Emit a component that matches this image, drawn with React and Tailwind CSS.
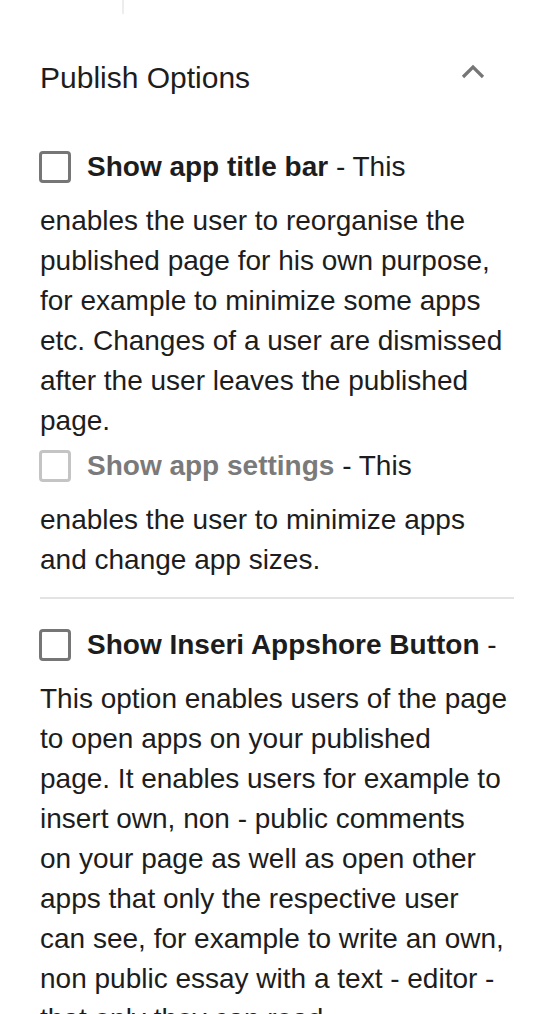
import React from "react";

function Box({ disabled }) {
    return (
        <span className={`shrink-0 w-8 h-8 rounded-[4px] border-[3.5px] bg-white ${disabled ? "border-[#c4c4c4]" : "border-[#767676]"}`}></span>
    );
}

function OptionRow({ label, suffix, disabled }) {
    return (
        <label className="flex items-center gap-4 h-10 -ml-px">
            <Box disabled={disabled} />
            <span className="whitespace-nowrap">
                <span className={`font-bold ${disabled ? "text-[#7a7a7a]" : "text-[#1d1d1d]"}`}>{label}</span>
                <span> {suffix}</span>
            </span>
        </label>
    );
}

const appshoreLines = [
    "This option enables users of the page",
    "to open apps on your published",
    "page. It enables users for example to",
    "insert own, non - public comments",
    "on your page as well as open other",
    "apps that only the respective user",
    "can see, for example to write an own,",
    "non public essay with a text - editor -",
    "that only they can read.",
];

export default function App() {
    return (
        <div className="w-[558px] min-h-[1014px] bg-white text-[#1d1d1d] overflow-hidden" style={{ fontFamily: '"Liberation Sans", Arial, sans-serif' }}>
            <div className="ml-[122px] w-[2px] h-[14px] bg-[#ededed]"></div>

            <div className="pl-10 pr-[44px]">
                <div className="flex items-center justify-between mt-[44px] h-10">
                    <h2 className="text-[30px] leading-10 font-normal">Publish Options</h2>
                    <svg width="24" height="16" viewBox="0 0 24 16" className="mr-[29px] -mt-3">
                        <polyline points="2,13 12,3 22,13" fill="none" stroke="#767676" strokeWidth="3.2" />
                    </svg>
                </div>

                <div className="text-[28px] leading-10">
                    <div className="mt-[49px]">
                        <OptionRow label="Show app title bar" suffix="- This" />
                    </div>
                    <p className="mt-[14px]">
                        enables the user to reorganise the published page for his own purpose, for example to minimize some apps etc. Changes of a user are dismissed after the user leaves the published page.
                    </p>

                    <div className="mt-[5px]">
                        <OptionRow label="Show app settings" suffix="- This" disabled />
                    </div>
                    <p className="mt-[14px]">
                        enables the user to minimize apps and change app sizes.
                    </p>

                    <div className="mt-[17px] h-[2px] bg-[#e3e3e3]"></div>

                    <div className="mt-[26px]">
                        <OptionRow label="Show Inseri Appshore Button" suffix="-" />
                    </div>
                    <p className="mt-[14px]">
                        {appshoreLines.map((line, i) => (
                            <span key={i} className="block whitespace-nowrap">{line}</span>
                        ))}
                    </p>
                </div>
            </div>
        </div>
    );
}
